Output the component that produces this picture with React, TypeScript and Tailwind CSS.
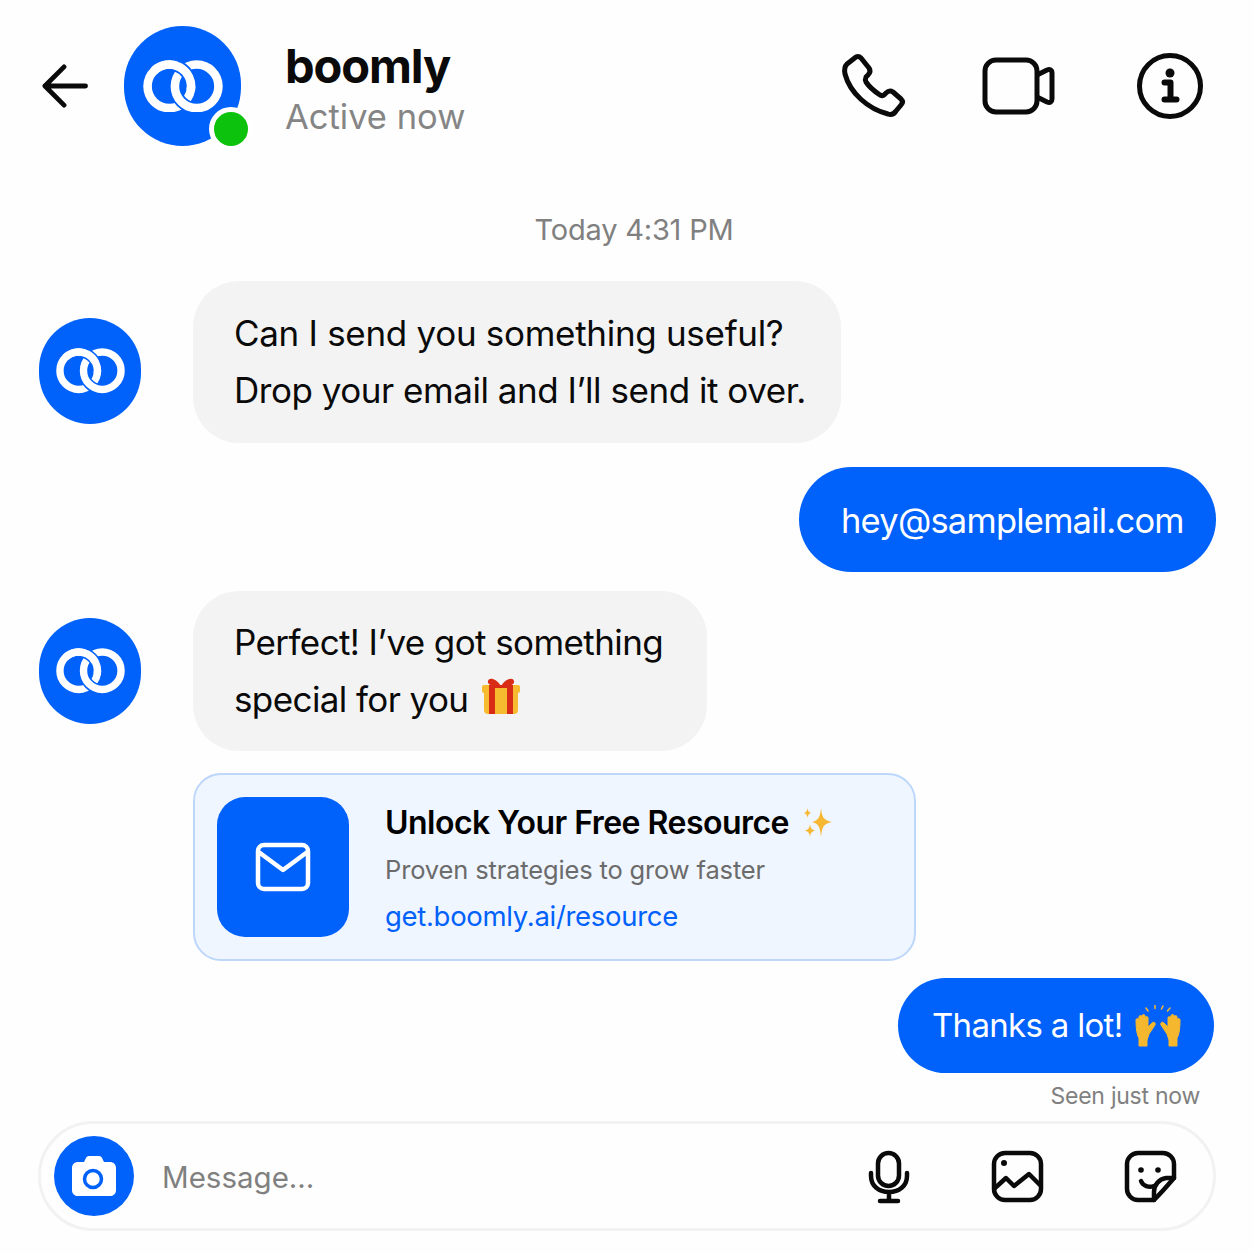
import React from 'react';

const BLUE = '#0061fb';

const Rings: React.FC<{ className?: string }> = ({ className }) => (
  <svg viewBox="0 0 79 52" className={className} fill="none">
    <circle cx="26" cy="26" r="21.500" stroke="#fff" strokeWidth="8.500" />
    <circle cx="53" cy="26" r="21.500" stroke={BLUE} strokeWidth="12" />
    <circle cx="53" cy="26" r="21.500" stroke="#fff" strokeWidth="8.500" />
    {/* left ring passes back over the right one at the top crossing */}
    <path d="M33 5.670A21.500 21.500 0 0 1 47.500 26" stroke={BLUE} strokeWidth="12" />
    <path d="M10.800 10.800A21.500 21.500 0 0 1 47.120 30" stroke="#fff" strokeWidth="8.500" />
  </svg>
);

const Avatar = () => (
  <div className="flex h-[106px] w-[102px] shrink-0 items-center justify-center rounded-full bg-[#0061fb]">
    <Rings className="w-[69px]" />
  </div>
);

const Gift = () => (
  <svg viewBox="0 0 38 38" className="ml-[14px] inline-block h-[38px] w-[38px] align-[-3px]">
    <path d="M2 15h34v18a4 4 0 0 1-4 4H6a4 4 0 0 1-4-4z" fill="#f6bb2e" />
    <rect x="0" y="8" width="38" height="8" rx="2" fill="#f6bb2e" />
    <rect x="7" y="8" width="6" height="29" fill="#d92c17" />
    <rect x="25" y="8" width="6" height="29" fill="#d92c17" />
    <path d="M19 9C14 1 7 0 6 4c-1 4 6 6 13 5zM19 9c5-8 12-9 13-5 1 4-6 6-13 5z" fill="#d92c17" />
    <rect x="7" y="8" width="24" height="3" fill="#d92c17" />
  </svg>
);

const Sparkles = () => (
  <svg viewBox="0 0 30 32" className="h-[32px] w-[30px]" fill="#f6b733">
    <path d="M17 1c1 9 2 12 11 14-9 2-10 5-11 15-1-10-2-13-9-15 7-2 8-5 9-14z" />
    <path d="M3.500 1c.5 3 1 4 3.500 5-2.500 1-3 2-3.500 5C3 8 2.500 7 0 6c2.500-1 3-2 3.500-5z" />
    <path d="M6 17c.5 4 1.500 5.500 5 6.500-3.500 1-4.500 2.500-5 6.500-.5-4-1.500-5.500-5-6.500 3.500-1 4.500-2.500 5-6.500z" />
  </svg>
);

const Hands = () => (
  <svg viewBox="0 0 46 42" className="ml-[13px] h-[42px] w-[46px] shrink-0">
    <g stroke="#f6b733" strokeWidth="1.500" strokeLinecap="round">
      <path d="M11 3l2 3M20 0v3.500M28 1l-1.500 3M35 3l-2.500 3" />
    </g>
    <g fill="#f5b72e" stroke="#f5b72e" strokeWidth="1">
      <path d="M4 41V33C2 30 1 24 1 15c0-2 3-2 3 0v-3c0-2 3-2 3 0v-1c0-2 3-2 3 0v2c0-2 3-2 3 0v9l4-4c2-2 4 0 3 2l-6 9c-1 2-1 4-2 6v6z" />
      <path d="M42 41V33c2-3 3-9 3-18 0-2-3-2-3 0v-3c0-2-3-2-3 0v-1c0-2-3-2-3 0v2c0-2-3-2-3 0v9l-4-4c-2-2-4 0-3 2l6 9c1 2 1 4 2 6v6z" />
    </g>
  </svg>
);

export default function App() {
  return (
    <div className="flex h-[1254px] w-[1254px] flex-col overflow-hidden bg-[#fefefe] font-['Inter',sans-serif] text-[#0a0a0a]">
      {/* header */}
      <header className="mt-[26px] flex h-[120px] shrink-0 items-center pl-[42px] pr-[49px]">
        <svg viewBox="0 0 48 46" className="h-[44px] w-[46px]" fill="none" stroke="#0a0a0a" strokeWidth="5" strokeLinecap="round" strokeLinejoin="round">
          <path d="M45.500 23H3M23 3L3 23l20 20" />
        </svg>
        <div className="relative ml-[36px] flex h-[120px] w-[117px] items-center justify-center rounded-full bg-[#0061fb]">
          <Rings className="w-[80px]" />
          <span className="absolute bottom-[-5px] right-[-12px] h-[44px] w-[44px] rounded-full border-[5px] border-white bg-[#0cc20c]" />
        </div>
        <div className="ml-[44px] flex flex-col pt-[10px]">
          <span className="text-[47px] font-bold leading-[52px] tracking-[-1.100px]">boomly</span>
          <span className="text-[34.500px] leading-[50px] text-[#858585]">Active now</span>
        </div>
        <div className="ml-auto flex items-center">
          <svg viewBox="20 20 70 70" className="h-[70px] w-[70px]" fill="none" stroke="#0a0a0a" strokeWidth="5" strokeLinejoin="round">
            <path d="M36 26c2-1 4 0 5 1l8 10c2 3 1 5-1 7l-2 2c-1 2-1 3 0 5 4 6 8 9 14 13 2 1 3 1 4 0l2-2c2-2 4-3 7-1l8 7c2 2 2 4 0 6l-5 6c-2 3-5 4-8 3-20-5-38-21-43-40-1-5 0-8 2-10z" />
          </svg>
          <svg viewBox="160 25 75 60" className="ml-[70px] h-[60px] w-[75px]" fill="none" stroke="#0a0a0a" strokeWidth="5" strokeLinejoin="round">
            <rect x="165" y="29" width="52" height="52" rx="11" />
            <path d="M217 44l10-5c3-1 5 0 5 3v26c0 3-2 4-5 3l-10-5" />
          </svg>
          <svg viewBox="315 20 70 70" className="ml-[80px] h-[70px] w-[70px]" fill="none" stroke="#0a0a0a">
            <circle cx="350" cy="55" r="30.500" strokeWidth="5" />
            <circle cx="350" cy="42" r="4.500" fill="#0a0a0a" stroke="none" />
            <path d="M344.500 51.500h6v17M344.500 68.500h12" strokeWidth="6" strokeLinecap="round" strokeLinejoin="round" />
          </svg>
        </div>
      </header>

      <div className="mt-[65px] h-[38px] pl-[14px] text-center text-[29px] leading-[38px] tracking-[-0.2px] text-[#808080]">Today 4:31 PM</div>

      {/* first incoming */}
      <div className="mt-[32px] flex items-start pl-[39px]">
        <div className="mt-[37px]"><Avatar /></div>
        <div className="ml-[52px] flex h-[162px] w-[648px] flex-col justify-center rounded-[46px] bg-[#f3f3f3] pl-[41px] text-[35px] leading-[57px]">
          <p className="tracking-[-0.3px]">Can I send you something useful?</p>
          <p className="tracking-[-0.47px]">Drop your email and I’ll send it over.</p>
        </div>
      </div>

      <div className="mt-[24px] flex justify-end pr-[38px]">
        <div className="flex h-[105px] w-[417px] items-center rounded-full bg-[#0061fb] pl-[42px] pt-[2px] text-[34.500px] tracking-[-0.78px] text-white">hey@samplemail.com</div>
      </div>

      {/* second incoming */}
      <div className="mt-[19px] flex items-center pl-[39px]">
        <Avatar />
        <div className="ml-[52px] flex h-[160px] w-[514px] flex-col justify-center rounded-[46px] bg-[#f3f3f3] pl-[41px] text-[35px] leading-[57px] tracking-[-0.6px]">
          <p>Perfect! I’ve got something</p>
          <p>special for you<Gift /></p>
        </div>
      </div>

      {/* resource card */}
      <div className="ml-[193px] mt-[22px] flex h-[188px] w-[723px] items-center rounded-[28px] border-2 border-[#bdd7fb] bg-[#f0f6ff] pl-[22px]">
        <div className="flex h-[140px] w-[132px] items-center justify-center rounded-[28px] bg-[#0061fb]">
          <svg viewBox="0 0 56 50" className="h-[50px] w-[56px]" fill="none" stroke="#fff" strokeWidth="4.500" strokeLinecap="round" strokeLinejoin="round">
            <rect x="3" y="3" width="50" height="44" rx="6" />
            <path d="M5 11l23 17 23-17" />
          </svg>
        </div>
        <div className="ml-[36px] flex flex-col pt-[3px]">
          <div className="flex h-[48px] items-center">
            <span className="text-[32px] font-semibold tracking-[-0.52px] text-black">Unlock Your Free Resource</span>
            <span className="ml-[15px]"><Sparkles /></span>
          </div>
          <span className="text-[25.500px] leading-[46px] tracking-[-0.15px] text-[#6b6b6b]">Proven strategies to grow faster</span>
          <span className="text-[27.500px] leading-[46px] tracking-[-0.3px] text-[#0061fb]">get.boomly.ai/resource</span>
        </div>
      </div>

      <div className="mt-[17px] flex justify-end pr-[40px]">
        <div className="flex h-[95px] w-[316px] items-center rounded-full bg-[#0061fb] pl-[34px] text-[33px] tracking-[-0.7px] text-white">
          Thanks a lot!<Hands />
        </div>
      </div>

      <div className="mt-[7px] h-[32px] pr-[54px] text-right text-[23px] leading-[32px] tracking-[-0.25px] text-[#808080]">Seen just now</div>

      {/* composer */}
      <div className="mx-[38px] mt-[9px] flex h-[110px] items-center rounded-full border-[3px] border-[#f2f2f2] pl-[13px] pr-[35px]">
        <div className="flex h-[80px] w-[80px] items-center justify-center rounded-full bg-[#0061fb]">
          <svg viewBox="0 0 44 40" className="h-[40px] w-[44px]">
            <path d="M6 6h6l2-4c.5-1 1-2 3-2h10c2 0 2.500 1 3 2l2 4h6c3 0 6 2 6 6v22c0 4-3 6-6 6H6c-3 0-6-2-6-6V12c0-4 3-6 6-6z" fill="#fff" />
            <circle cx="21" cy="23" r="8.500" fill="none" stroke="#0061fb" strokeWidth="3.500" />
          </svg>
        </div>
        <span className="ml-[28px] pt-[2px] text-[29.500px] text-[#808080]">Message...</span>
        <div className="ml-auto flex items-center">
          <svg viewBox="17 19 44 56" className="h-[56px] w-[44px]" fill="none" stroke="#0a0a0a" strokeWidth="4.500" strokeLinecap="round" strokeLinejoin="round">
            <rect x="28" y="24" width="21" height="33" rx="10.500" />
            <path d="M21 44v3c0 10 8 16 18 16s18-6 18-16v-3M39 63v8M30 72h18" />
          </svg>
          <svg viewBox="140 20 56 56" className="ml-[78px] h-[56px] w-[56px]" fill="none" stroke="#0a0a0a" strokeWidth="4.500" strokeLinecap="round" strokeLinejoin="round">
            <rect x="145" y="25" width="47" height="47" rx="11" />
            <circle cx="155" cy="35" r="3" fill="#0a0a0a" stroke="none" />
            <path d="M146 60l11-10 8 8 15-12 11 11" />
          </svg>
          <svg viewBox="273 20 56 56" className="ml-[77px] h-[56px] w-[56px]" fill="none" stroke="#0a0a0a" strokeWidth="4.500" strokeLinecap="round" strokeLinejoin="round">
            <path d="M305 72h-16c-6 0-11-5-11-11V36c0-6 5-11 11-11h25c6 0 11 5 11 11v14c-6 7-13 15-20 22z" />
            <path d="M305 72v-8c0-7 5-13 12-14h8" />
            <path d="M292 53c2 5 8 7 13 5" />
            <circle cx="292" cy="42" r="2.800" fill="#0a0a0a" stroke="none" />
            <circle cx="309" cy="42" r="2.800" fill="#0a0a0a" stroke="none" />
          </svg>
        </div>
      </div>
    </div>
  );
}
